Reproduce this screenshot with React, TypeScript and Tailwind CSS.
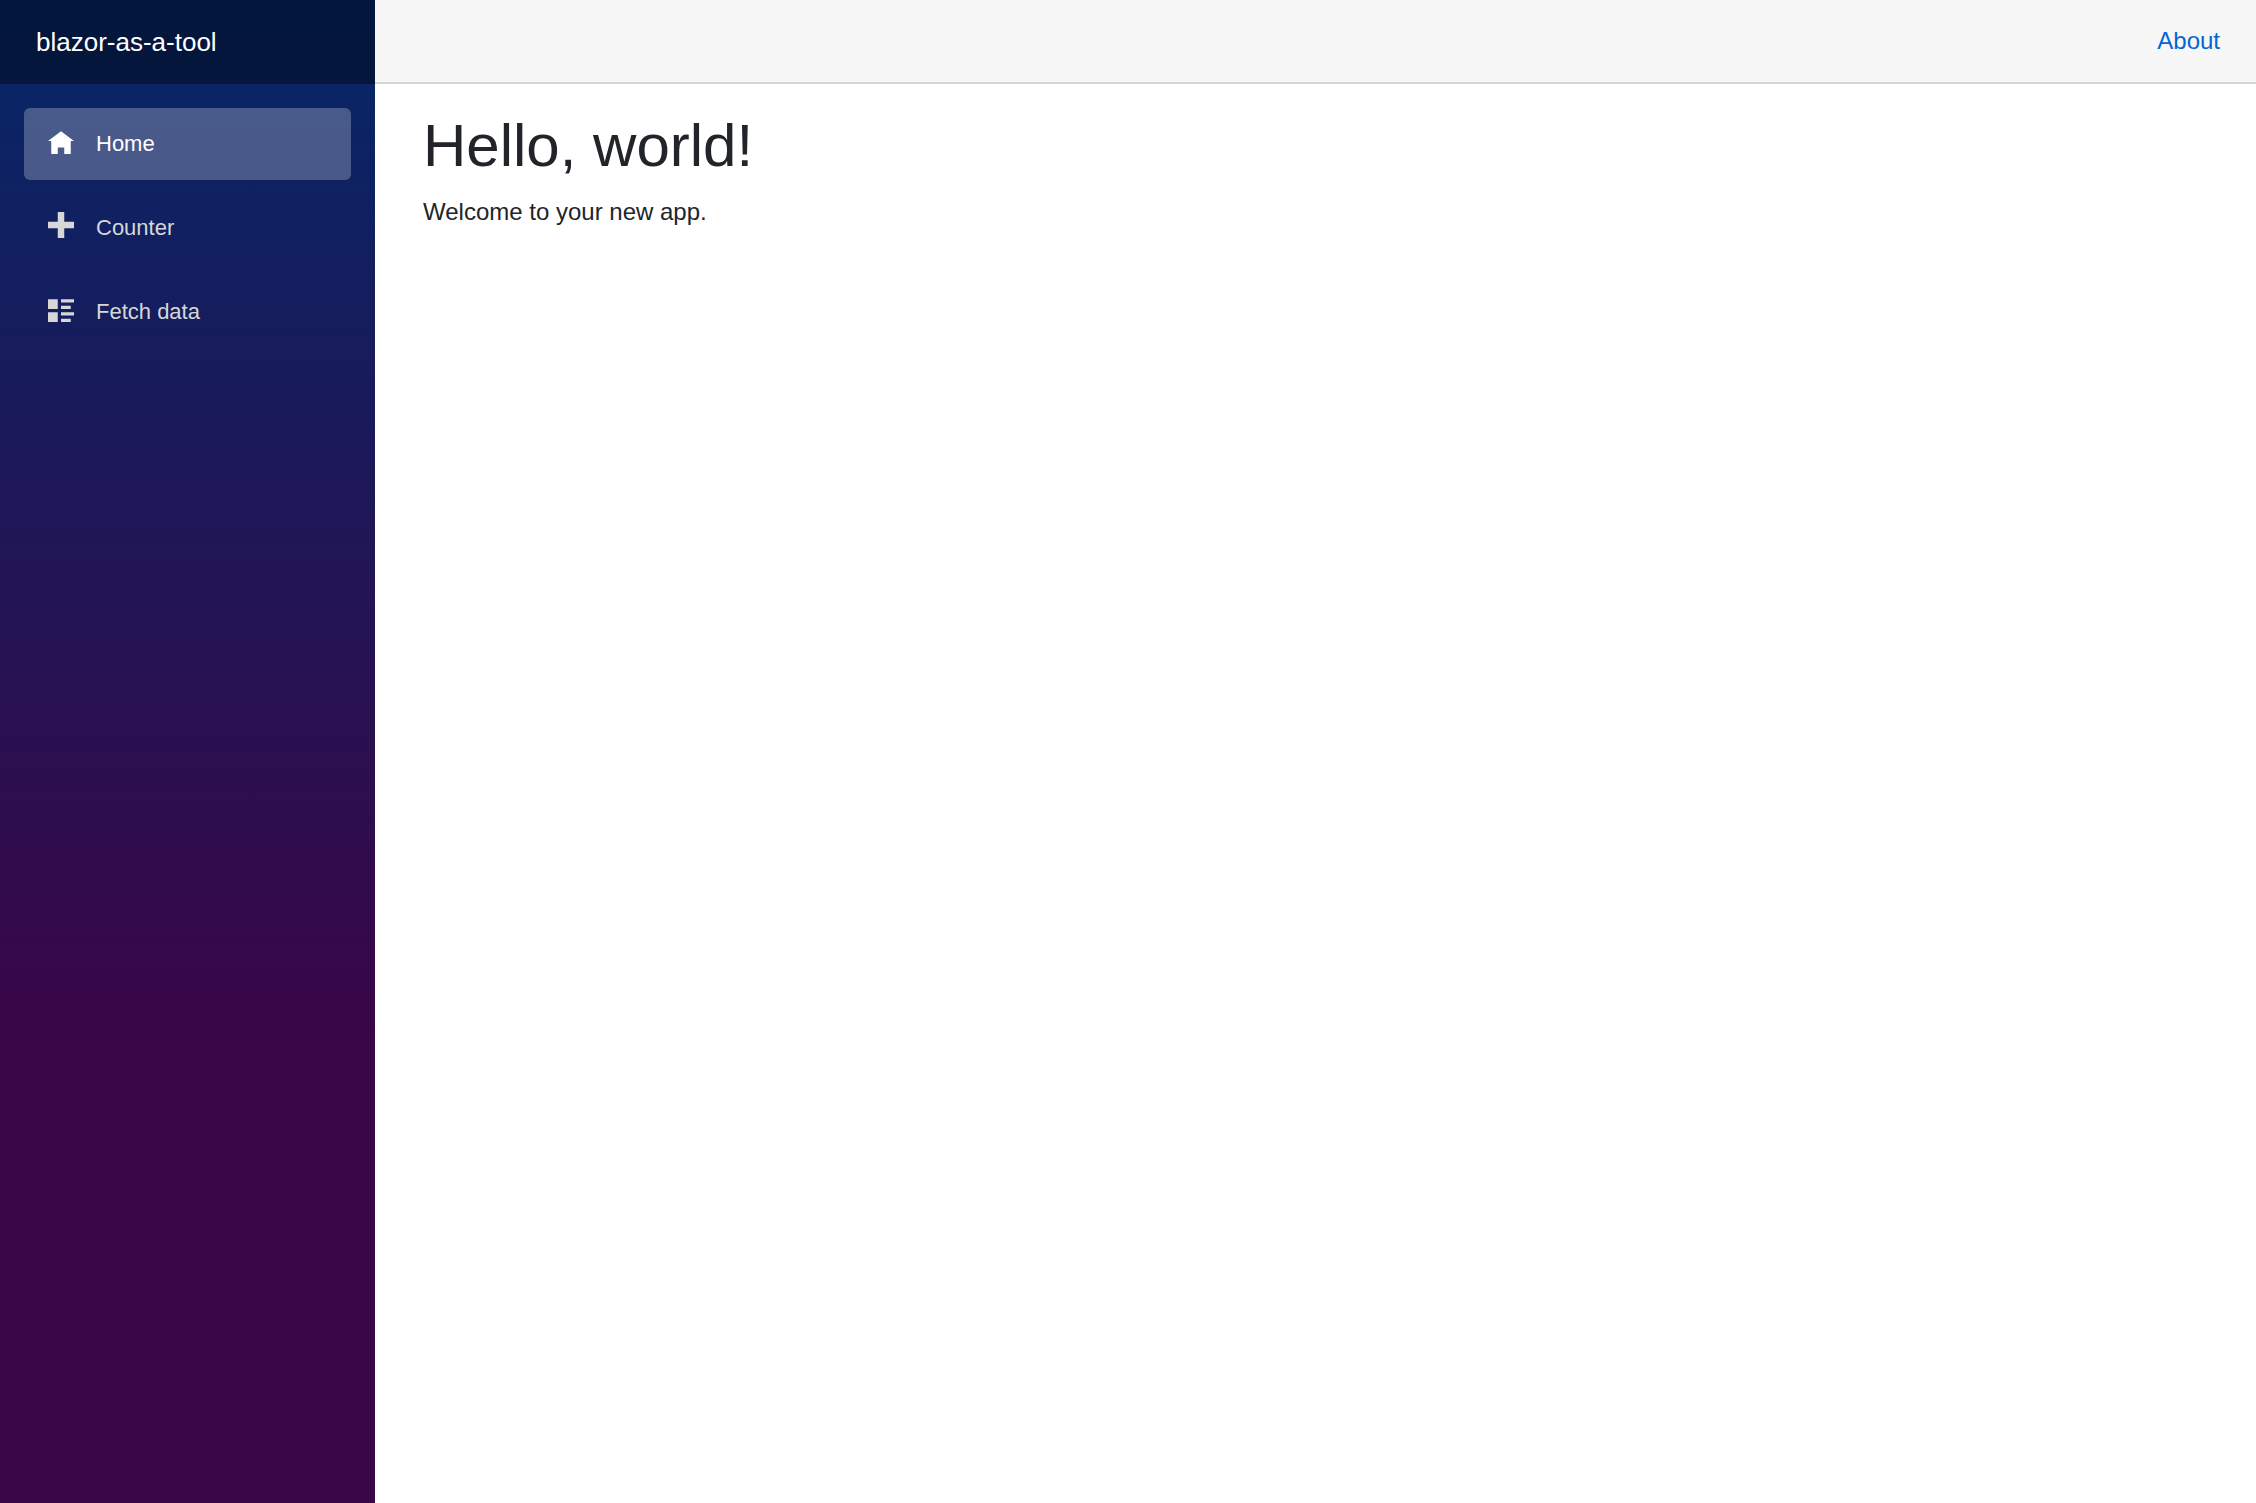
type NavItem = { label: string; href: string; path: string; active?: boolean };

const navItems: NavItem[] = [
  {
    label: "Home",
    href: "#home",
    path: "M4 1l-4 3h1v4h2v-2h2v2h2v-4.03l1 .03-4-3z",
    active: true,
  },
  {
    label: "Counter",
    href: "#counter",
    path: "M3 0v3h-3v2h3v3h2v-3h3v-2h-3v-3h-2z",
  },
  {
    label: "Fetch data",
    href: "#fetchdata",
    path: "M0 1v3h3v-3h-3zm4 0v1h4v-1h-4zm0 2v1h3v-1h-3zm-4 2v3h3v-3h-3zm4 0v1h4v-1h-4zm0 2v1h3v-1h-3z",
  },
];

function NavMenu() {
  return (
    <nav aria-label="Main">
      <ul className="flex flex-col gap-3 p-6">
        {navItems.map((item) => (
          <li key={item.label}>
            <a
              href={item.href}
              aria-current={item.active ? "page" : undefined}
              className={
                item.active
                  ? "flex h-18 items-center rounded-md bg-white/25 px-6 text-[22px] text-white"
                  : "flex h-18 items-center rounded-md px-6 text-[22px] text-[#d7d7d7] hover:bg-white/10"
              }
            >
              <span className="w-12 pb-1.5" aria-hidden="true">
                <svg viewBox="0 0 8 8" className="block size-[26px] fill-current">
                  <path d={item.path} />
                </svg>
              </span>
              {item.label}
            </a>
          </li>
        ))}
      </ul>
    </nav>
  );
}

export default function App() {
  return (
    <div className="flex min-h-screen bg-white font-['Liberation_Sans',Arial,sans-serif] text-2xl text-[#212529]">
      <aside className="w-[375px] shrink-0 bg-[linear-gradient(180deg,rgb(5,39,103)_0%,#3a0647_70%)]">
        <div className="flex h-21 items-center bg-black/40 px-9">
          <a href="#home" className="text-[26px] text-white">
            blazor-as-a-tool
          </a>
        </div>
        <NavMenu />
      </aside>
      <div className="min-w-0 flex-1">
        <header className="flex h-21 items-center justify-end border-b-2 border-[#d6d5d5] bg-[#f7f7f7] px-9">
          <a href="#about" className="text-[#0366d6] hover:underline">
            About
          </a>
        </header>
        <main className="px-12 pt-[26px]">
          <h1 className="mb-3 text-[60px] leading-[72px] font-medium">Hello, world!</h1>
          <p className="leading-9">Welcome to your new app.</p>
        </main>
      </div>
    </div>
  );
}
